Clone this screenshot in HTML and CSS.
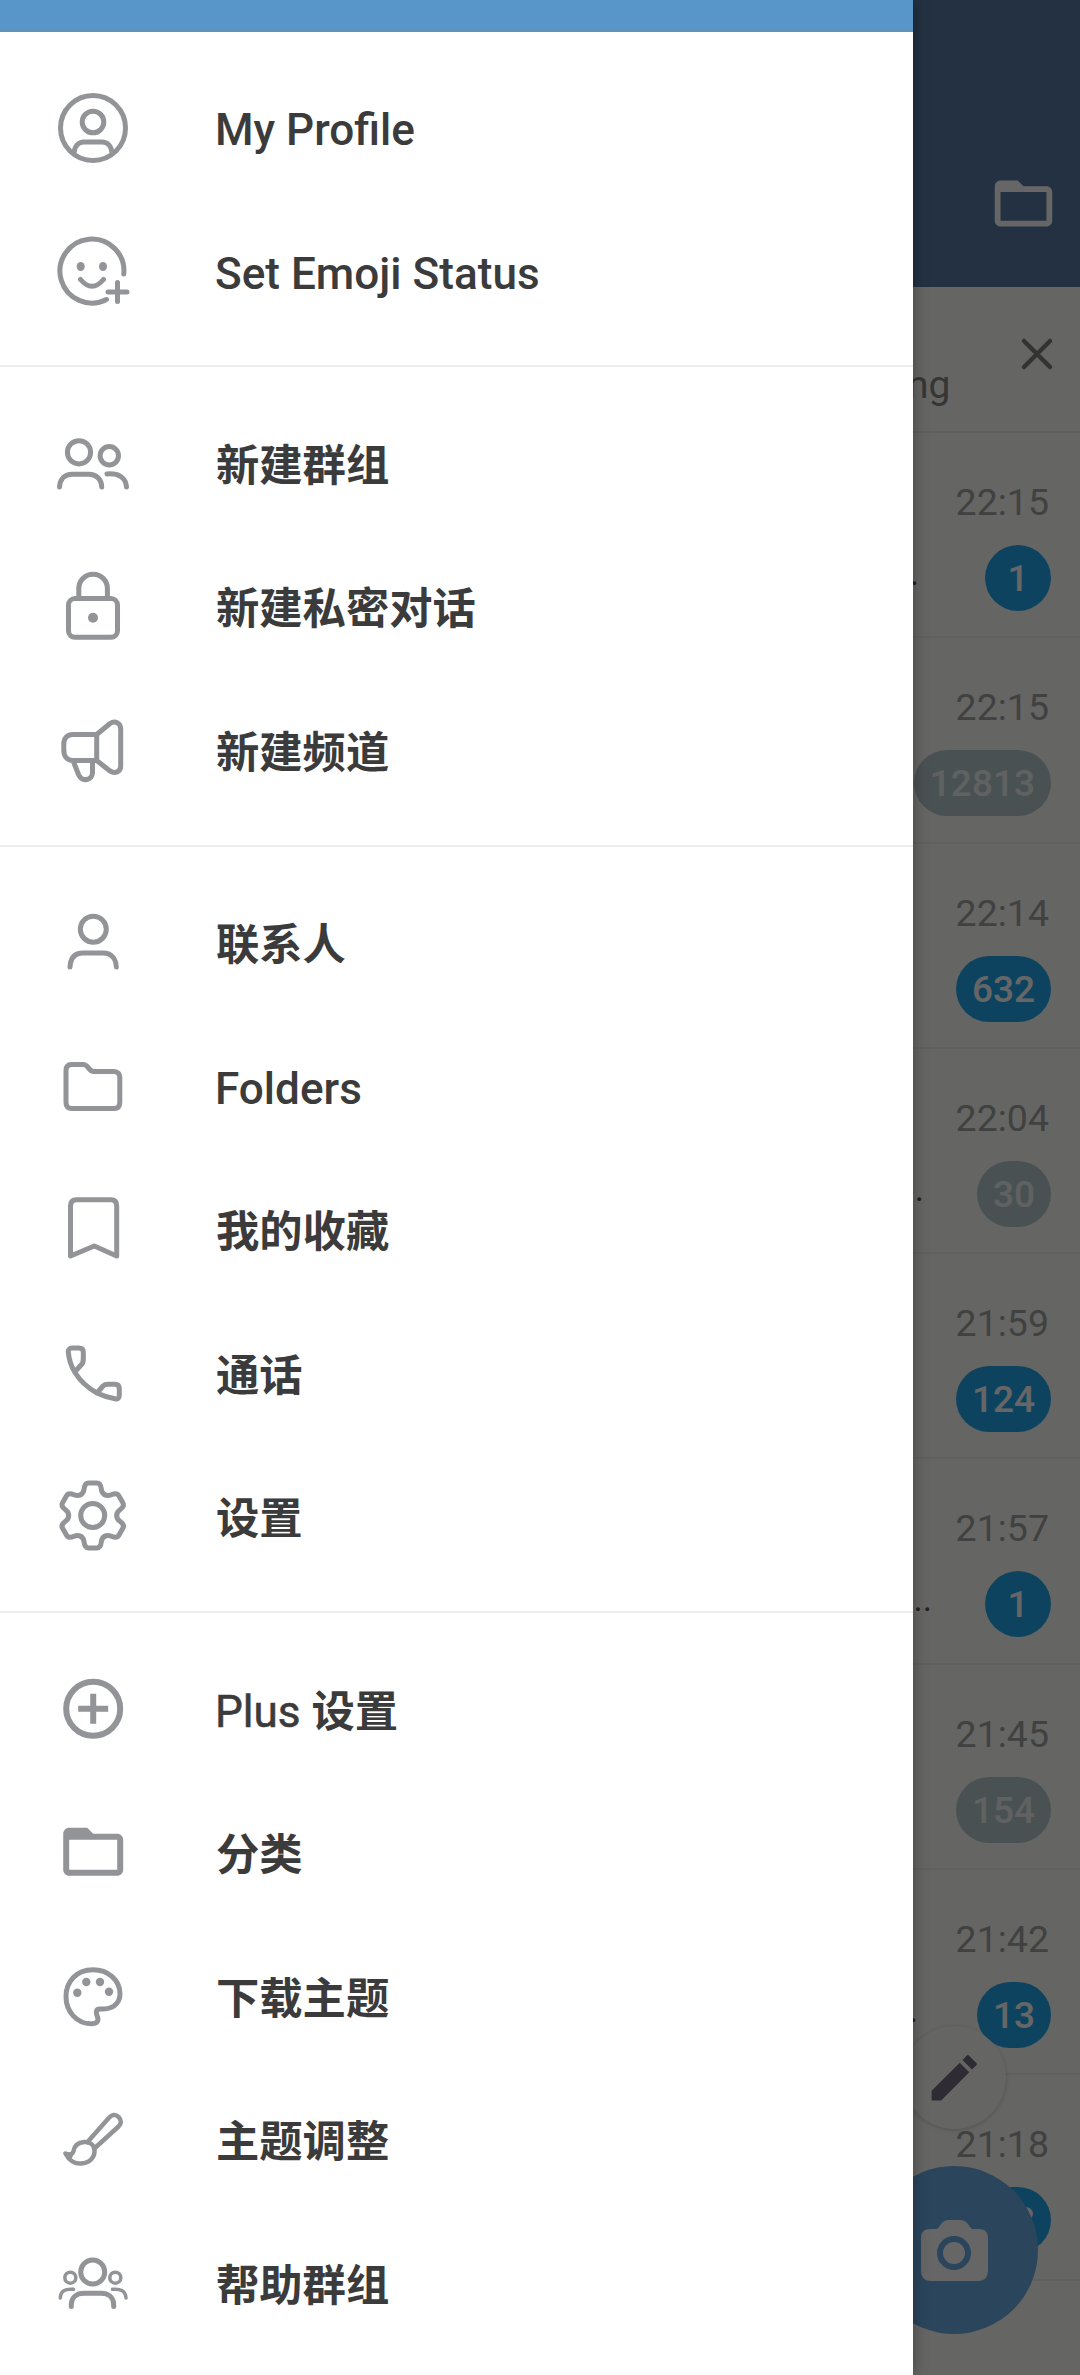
FILE: index.html
```html
<!DOCTYPE html>
<html lang="zh-CN">
  <head>
    <meta charset="UTF-8" />
    <title>Plus</title>
    <link rel="stylesheet" href="styles.css">
  </head>

  <body>
    <div class="app">
      <!-- 会话列表 -->
      <main class="chats">
        <header class="header">
          <svg class="header-icon" viewBox="0 0 24 24"><path d="M20 6h-8l-2-2H4c-1.1 0-1.99.9-1.99 2L2 18c0 1.1.9 2 2 2h16c1.1 0 2-.9 2-2V8c0-1.1-.9-2-2-2zm0 12H4V8h16v10z"/></svg>
        </header>
        <div class="banner">
          <div class="banner-text">ng</div>
          <svg class="close" viewBox="0 0 34 34"><path d="M4 4L30 30M30 4L4 30"/></svg>
        </div>
        <ul class="chat-list">
          <li>
            <div class="time">22:15</div>
            <div class="line"><span class="msg far">...</span><span class="badge">1</span></div>
          </li>
          <li>
            <div class="time">22:15</div>
            <div class="line"><span class="badge muted">12813</span></div>
          </li>
          <li>
            <div class="time">22:14</div>
            <div class="line"><span class="badge">632</span></div>
          </li>
          <li>
            <div class="time">22:04</div>
            <div class="line"><span class="msg">...</span><span class="badge muted">30</span></div>
          </li>
          <li>
            <div class="time">21:59</div>
            <div class="line"><span class="badge">124</span></div>
          </li>
          <li>
            <div class="time">21:57</div>
            <div class="line"><span class="msg">...</span><span class="badge">1</span></div>
          </li>
          <li>
            <div class="time">21:45</div>
            <div class="line"><span class="badge muted">154</span></div>
          </li>
          <li>
            <div class="time">21:42</div>
            <div class="line"><span class="msg mid">...</span><span class="badge">13</span></div>
          </li>
          <li>
            <div class="time">21:18</div>
            <div class="line"><span class="badge">23</span></div>
          </li>
        </ul>
        <div class="fab fab-small">
          <svg class="pencil" viewBox="0 0 24 24"><path d="M3 17.25V21h3.75L17.81 9.94l-3.75-3.75L3 17.25zM20.71 7.04c.2-.2.2-.4 0-.6l-3.150-3.150c-.2-.2-.4-.2-.6 0l-1.830 1.830 3.750 3.750 1.830-1.830z"/></svg>
        </div>
        <div class="fab fab-camera">
          <svg class="camera" viewBox="0 0 67 61">
            <path d="M10 9H15C18 9 19 4 22 2C24 .5 26 0 28 0H38C41 0 43 .5 45 2C48 4 49 9 52 9H57C64 9 67 12 67 18V50C67 57 64 61 57 61H10C3 61 0 57 0 50V18C0 12 3 9 10 9Z"/>
            <circle class="lens" cx="33" cy="33" r="14"/>
          </svg>
        </div>
      </main>
      <div class="scrim"></div>

      <!-- 侧边菜单 -->
      <aside class="drawer">
        <div class="status-bar"></div>
        <nav>
          <div class="group">
            <div class="item">
              <svg class="icon" viewBox="0 0 80 80"><circle cx="40" cy="39" r="32.5"/><circle cx="40" cy="33" r="10.8"/><path d="M21 64C21.500 57 25.500 53 31 53H49C54.500 53 58.500 57 59 64"/></svg>
              <span>My Profile</span>
            </div>
            <div class="item">
              <svg class="icon" viewBox="0 0 80 80"><path d="M70.800 42A32 32 0 1 0 53.500 67.500M27.500 47.500Q39 61 50.500 47.500M64.500 50.500V69.500M55 60H74"/><ellipse class="fill" cx="27.700" cy="34.500" rx="4" ry="4.600"/><ellipse class="fill" cx="50" cy="34.500" rx="4" ry="4.600"/></svg>
              <span>Set Emoji Status</span>
            </div>
          </div>

          <div class="group">
            <div class="item zh">
              <svg class="icon" viewBox="0 0 80 80"><circle cx="26" cy="27.300" r="11.600"/><circle cx="56.300" cy="30.800" r="9.200"/><path d="M6.500 62C7 54 12 49.200 19 49.200H36C43 49.200 48.500 54 48.700 62M54 49C66 48 73 53 73.500 62"/></svg>
              <span>新建群组</span>
            </div>
            <div class="item zh">
              <svg class="icon" viewBox="0 0 80 80"><rect x="15.500" y="30.500" width="49" height="38.800" rx="6.500"/><path d="M25.800 30V20.500A14.300 14.300 0 0 1 54.400 20.500V30"/><circle class="fill" cx="40" cy="49.700" r="5"/></svg>
              <span>新建私密对话</span>
            </div>
            <div class="item zh">
              <svg class="icon" viewBox="0 0 80 80"><path d="M43.700 22.500H20C14 22.500 10.800 26.500 10.800 32V38C10.800 44.500 14 48.500 20 48.500H43.700ZM43.700 22.500L57 11.500C62 8 67.700 11 67.700 17V54C67.700 60 62 62 57 59L43.700 48.500M20 48.500L25.500 62.500C29 70.500 39.500 68.500 39.500 60.500V48.500"/></svg>
              <span>新建频道</span>
            </div>
          </div>

          <div class="group">
            <div class="item zh">
              <svg class="icon" viewBox="0 0 80 80"><circle cx="40.300" cy="25.200" r="13"/><path d="M17 63C17.500 54 22 49 30 49H50C58 49 63 54 63.300 63"/></svg>
              <span>联系人</span>
            </div>
            <div class="item">
              <svg class="icon" viewBox="0 0 80 80"><path d="M18.500 16.500H30C36 16.500 35 23.500 41 23.500H61C65 23.500 66.800 26 66.800 29.500V54.500C66.800 58.500 65 60.500 61 60.500H19C15 60.500 13 58.500 13 54.500V22.500C13 18.500 15 16.500 18.500 16.500Z"/></svg>
              <span>Folders</span>
            </div>
            <div class="item zh">
              <svg class="icon" viewBox="0 0 80 80"><path d="M17.500 65V15C17.500 11 19.500 8.700 23.500 8.700H58C62 8.700 63.700 11 63.700 15V65L41.300 55Z"/></svg>
              <span>我的收藏</span>
            </div>
            <div class="item zh">
              <svg class="icon" viewBox="0 0 80 80"><path d="M21.700 37L29 29C30.300 27.500 30.500 26 30.300 17C30.300 14 28.500 13 26 13H19C16.500 13 15.200 14.500 15.300 17C16 25 18 31 21.700 37C27 46 35 53 44 58C50 61 56 63 63 64C65.500 64.300 66.300 62 66.300 60V54C66.300 51 65 49.300 62 49.300H55C53 49.300 51.500 49.500 50 51L44 58"/></svg>
              <span>通话</span>
            </div>
            <div class="item zh">
              <svg class="icon" viewBox="0 0 80 80">
                <defs><path id="tooth" d="M-12-20.800C-9.800-22-9-23-8.600-26.500C-8.200-30.500-7-32.500-4-32.500H4C7-32.500 8.200-30.500 8.600-26.500C9-23 9.800-22 12-20.800"/></defs>
                <g transform="translate(39.700 37.500)">
                  <use href="#tooth"/>
                  <use href="#tooth" transform="rotate(60)"/>
                  <use href="#tooth" transform="rotate(120)"/>
                  <use href="#tooth" transform="rotate(180)"/>
                  <use href="#tooth" transform="rotate(240)"/>
                  <use href="#tooth" transform="rotate(300)"/>
                  <circle r="12"/>
                </g>
              </svg>
              <span>设置</span>
            </div>
          </div>

          <div class="group">
            <div class="item">
              <svg class="icon bold" viewBox="0 0 80 80"><circle cx="40.200" cy="37.700" r="27"/><path d="M40.200 22.700V52.700M25.200 37.700H55.200"/></svg>
              <span class="plus">Plus <b>设置</b></span>
            </div>
            <div class="item zh">
              <svg class="icon" viewBox="0 0 80 80"><path class="fill" transform="translate(4.200 1.800) scale(3)" d="M20 6h-8l-2-2H4c-1.100 0-1.990.9-1.990 2L2 18c0 1.100.9 2 2 2h16c1.100 0 2-.9 2-2V8c0-1.100-.9-2-2-2zm0 12H4V8h16v10z"/></svg>
              <span>分类</span>
            </div>
            <div class="item zh">
              <svg class="icon" viewBox="0 0 80 80"><path d="M40 11.800C23 11.800 13 24 13 38.500C13 54 24 65.500 38 65.800C44 66 46 63 44.500 59C43 55.500 42 51 47 51C52 51 56 51.500 61 48C65 45 67 41 67 36C67 22 55 11.800 40 11.800Z"/><circle class="fill" cx="24.300" cy="34.700" r="4.200"/><circle class="fill" cx="33.300" cy="24" r="4.200"/><circle class="fill" cx="47" cy="24" r="4.200"/><circle class="fill" cx="56" cy="33.700" r="4.200"/></svg>
              <span>下载主题</span>
            </div>
            <div class="item zh">
              <svg class="icon thin" viewBox="0 0 80 80"><path d="M34.500 41L56 16.800C58.500 13.500 62.500 12.800 65.500 15.800C68.800 19 68.500 23 65.500 25.500L42.500 46.500"/><path d="M31 41C24.500 41.500 21.500 45 20.500 50C19.500 54 16 54 12.500 52.500C16 59.500 22 63 28 62.500C37 62 42 56 41.500 49C41 44 37 40.500 31 41Z"/><path class="fill" d="M10 51.500H21L19 57L16 58Z"/></svg>
              <span>主题调整</span>
            </div>
            <div class="item zh">
              <svg class="icon" viewBox="0 0 80 80"><circle cx="39.700" cy="27" r="12"/><path d="M18.300 61.500V60C18.300 52 24 48.300 31 48.300H48C55 48.300 60.700 52 60.700 60V61.500"/><g class="side"><circle cx="17.300" cy="32.700" r="5.500"/><circle cx="62.300" cy="32.700" r="5.500"/><path d="M7.300 53C7.500 46 12 43.500 20.500 44.300M73 53C72.500 46 68 43.500 59.500 44.300"/></g></svg>
              <span>帮助群组</span>
            </div>
          </div>
        </nav>
      </aside>
    </div>
  </body>
</html>
```
FILE: styles.css
```css
* {
  margin: 0;
  padding: 0;
  box-sizing: border-box;
}
body {
  font-family: Roboto, 'Noto Sans CJK SC', sans-serif;
}
ul {
  list-style: none;
}
.app {
  position: relative;
  width: 1080px;
  height: 2375px;
  overflow: hidden;
  background: #fdfefa;
}

/* 会话列表 */
.header {
  display: flex;
  justify-content: flex-end;
  align-items: flex-end;
  height: 287px;
  padding: 0 22px 49px 0;
  background: #587aa5;
}
.header-icon {
  width: 69px;
  height: 69px;
  fill: #fff;
}
.banner {
  display: flex;
  justify-content: space-between;
  height: 146px;
  padding: 50px 26px 0 907px;
  border-bottom: 2px solid #eee;
}
.banner-text {
  padding-top: 25px;
  font-size: 39px;
  line-height: 46px;
  color: #888;
}
.close {
  width: 34px;
  height: 34px;
  fill: none;
  stroke: #808080;
  stroke-width: 4.5;
  stroke-linecap: round;
}
.chat-list li {
  height: 205.3px;
  padding: 46px 29px 0 0;
  border-bottom: 2px solid #f0f1ee;
}
.time {
  padding-right: 2px;
  font-size: 37.5px;
  line-height: 46px;
  text-align: right;
  color: #a2a2a2;
}
.line {
  display: flex;
  justify-content: flex-end;
  align-items: center;
  height: 66px;
  margin-top: 20px;
}
.msg {
  padding: 0 53px 9px 0;
  font-size: 35px;
  color: #555;
}
.msg.mid {
  padding-right: 59px;
}
.msg.far {
  padding-right: 66px;
}
.badge {
  min-width: 66px;
  height: 66px;
  padding: 0 16px;
  border-radius: 33px;
  font-size: 37px;
  font-weight: 500;
  line-height: 67px;
  text-align: center;
  color: #fff;
  background: #25a9f0;
}
.badge.muted {
  color: #f0f4f5;
  background: #b9cbd0;
}
.fab {
  position: absolute;
  display: flex;
  justify-content: center;
  align-items: center;
  border-radius: 50%;
}
.fab-small {
  left: 903px;
  top: 2026px;
  width: 103px;
  height: 103px;
  background: #fdfefa;
  box-shadow: 0 1px 4px rgba(0, 0, 0, .2);
}
.pencil {
  width: 61px;
  height: 61px;
  fill: #776c80;
}
.fab-camera {
  left: 870px;
  top: 2166px;
  width: 168px;
  height: 168px;
  background: #69ace6;
}
.camera {
  width: 67px;
  height: 61px;
  fill: #fff;
}
.lens {
  stroke: #69ace6;
  stroke-width: 6;
}
.scrim {
  position: absolute;
  inset: 0;
  background: rgba(0, 0, 0, .6);
}

/* 侧边菜单 */
.drawer {
  position: absolute;
  left: 0;
  top: 0;
  width: 912.5px;
  height: 100%;
  background: #fff;
  box-shadow: 0 0 14px rgba(0, 0, 0, .35);
}
.status-bar {
  height: 31.5px;
  background: #5895c8;
  border-bottom: 2px solid #6292b8;
}
.group {
  padding: 25.3px 0 21.7px;
  border-bottom: 2px solid #ededee;
}
.group:last-child {
  border-bottom: 0;
}
.item {
  display: flex;
  align-items: center;
  height: 143.5px;
  padding-left: 53px;
  font-size: 44.1px;
  font-weight: 500;
  color: #3b3b3b;
}
.item span {
  margin-left: 82px;
  padding-top: 3px;
  line-height: 60px;
}
.item.zh {
  font-family: 'Noto Sans CJK SC', sans-serif;
  font-size: 43.3px;
  font-weight: 700;
}
.zh span {
  padding: 0 0 6px 1px;
}
.item .plus {
  font-weight: 400;
  -webkit-text-stroke: .6px #3b3b3b;
}
.plus b {
  font-size: 43.3px;
  font-weight: 700;
  -webkit-text-stroke: 0;
}
.icon {
  flex: none;
  width: 80px;
  height: 80px;
  fill: none;
  stroke: #929497;
  stroke-width: 5;
  stroke-linecap: round;
  stroke-linejoin: round;
}
.icon .fill {
  fill: #929497;
  stroke: none;
}
.icon.bold {
  stroke-width: 6;
  stroke-linecap: butt;
}
.icon.thin {
  stroke-width: 4.5;
}
.side {
  stroke-width: 3.5;
}
```
